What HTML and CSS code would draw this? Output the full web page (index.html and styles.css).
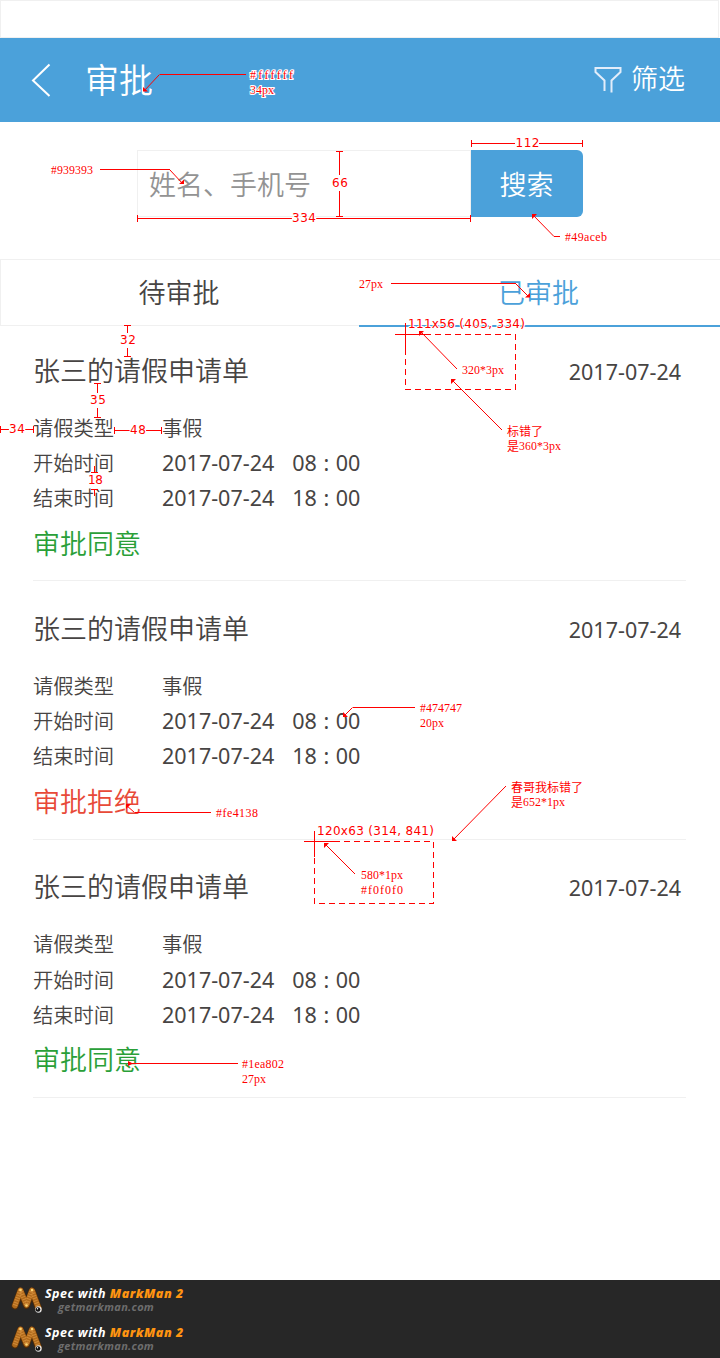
FILE: index.html
```html
<!DOCTYPE html>
<html lang="zh-CN">
<head>
<meta charset="utf-8">
<title>审批</title>
<link rel="stylesheet" href="styles.css">
</head>
<body>
<div class="page">
  <div class="statusbar"></div>
  <header class="header">
    <svg class="back" width="20" height="34" viewBox="0 0 20 34"><path d="M18.5 1.500 2 17.500 18.500 33" fill="none" stroke="#fff" stroke-width="2"/></svg>
    <h1 class="title">审批</h1>
    <svg class="funnel" width="28" height="28" viewBox="0 0 28 28"><path d="M10.500 25V14.500L1.500 6V2H26.500V6L17.500 14.500V26.500" fill="none" stroke="#e2edfa" stroke-width="2"/></svg>
    <span class="filter">筛选</span>
  </header>
  <div class="search">
    <div class="field">姓名、手机号</div>
    <div class="button">搜索</div>
  </div>
  <nav class="tabs">
    <div class="tab">待审批</div>
    <div class="tab active">已审批</div>
  </nav>
  <main class="list">
    <section class="card">
      <div class="head"><h2 class="name">张三的请假申请单</h2><span class="date">2017-07-24</span></div>
      <dl class="rows">
        <dt>请假类型</dt><dd>事假</dd>
        <dt>开始时间</dt><dd class="num"><span>2017-07-24</span><span class="clock">08 : 00</span></dd>
        <dt>结束时间</dt><dd class="num"><span>2017-07-24</span><span class="clock">18 : 00</span></dd>
      </dl>
      <p class="state ok">审批同意</p>
    </section>
    <section class="card">
      <div class="head"><h2 class="name">张三的请假申请单</h2><span class="date">2017-07-24</span></div>
      <dl class="rows">
        <dt>请假类型</dt><dd>事假</dd>
        <dt>开始时间</dt><dd class="num"><span>2017-07-24</span><span class="clock">08 : 00</span></dd>
        <dt>结束时间</dt><dd class="num"><span>2017-07-24</span><span class="clock">18 : 00</span></dd>
      </dl>
      <p class="state no">审批拒绝</p>
    </section>
    <section class="card">
      <div class="head"><h2 class="name">张三的请假申请单</h2><span class="date">2017-07-24</span></div>
      <dl class="rows">
        <dt>请假类型</dt><dd>事假</dd>
        <dt>开始时间</dt><dd class="num"><span>2017-07-24</span><span class="clock">08 : 00</span></dd>
        <dt>结束时间</dt><dd class="num"><span>2017-07-24</span><span class="clock">18 : 00</span></dd>
      </dl>
      <p class="state ok">审批同意</p>
    </section>
  </main>
  <footer class="footer">
    <div class="brand">
      <svg class="worm" width="34" height="30" viewBox="0 0 34 30"><use href="#worm"/></svg>
      <div class="credit"><div class="spec">Spec with <b>MarkMan 2</b></div><div class="site">getmarkman.com</div></div>
    </div>
    <div class="brand">
      <svg class="worm" width="34" height="30" viewBox="0 0 34 30"><use href="#worm"/></svg>
      <div class="credit"><div class="spec">Spec with <b>MarkMan 2</b></div><div class="site">getmarkman.com</div></div>
    </div>
  </footer>

  <svg class="marks" width="720" height="1358" viewBox="0 0 720 1358">
    <defs>
      <g id="worm" fill="none" stroke-linecap="round" stroke-linejoin="round">
        <path d="M4 20 9.500 5 15.500 19.500 21 5 27.500 22.500" stroke="#4f2b08" stroke-width="7"/>
        <path d="M4 19.500 9.500 4.500 15.500 19 21 4.500 27.500 22" stroke="#b06a1c" stroke-width="5.600"/>
        <path d="M4 19.500 9.500 4.500 15.500 19 21 4.500 27.500 22" stroke="#d08a38" stroke-width="4.500" stroke-linecap="butt" stroke-dasharray="1 1.500"/>
        <g fill="#ffd773"><circle cx="9.500" cy="4" r="1.300"/><circle cx="21" cy="4" r="1.300"/><circle cx="15.500" cy="19.500" r="1.300"/></g>
        <circle cx="27.500" cy="23.500" r="3.200" fill="#e4e4e4"/><circle cx="27" cy="23.500" r="2.300" fill="#111"/><circle cx="26.500" cy="22.800" r=".7" fill="#fff"/>
      </g>
    </defs>
    <g class="lines">
      <path d="M246 74.500H159.500M100 169.500H169.500M391 283.500H515.500M415 707.500H352.500M211 812.500H134.500M238 1063.500H130M554 236.500H560"/>
      <path d="M137.500 215V222M470.500 215V222M137.500 218.500H292M316 218.500H470"/>
      <path d="M471.500 140V147M582.500 140V147M471.500 143.500H515M539 143.500H582"/>
      <path d="M336 151.500H343M336 216.500H343M339.500 151V175M339.500 191V216"/>
      <path d="M124 325.500H131M124 356.500H131M127.500 325V333M127.500 348V356"/>
      <path d="M94 383.500H101M94 417.500H101M97.500 383V393M97.500 408V417"/>
      <path d="M.5 426V433M33.500 426V433M0 429.500H9M25 429.500H33"/>
      <path d="M114.500 427V434M161.500 427V434M115 430.500H130M146 430.500H161"/>
      <path d="M91 472.500H98M91 489.500H98M94.500 466V472M94.500 490V496"/>
      <path d="M395 334.500H425M405.500 323V350M304 841.500H334M314.500 831V857"/>
      <path class="dash" d="M425 334.500H515.500V389.500H405.500V344M334 841.500H433.500V903.500H314.500V851"/>
    </g>
    <g class="leaders">
      <path d="M159.500 74.500 144 91M169.500 169.500 183 184M515.500 283.500 529 297M352.500 707.500 344 716M134.500 812.500 126 805M554 236.500 533 215M457 369 421 332M502 430 452 380M506 786 453 840M355 874 325 844"/>
    </g>
    <g class="heads">
      <path d="M143 87V91.500H148zM184 179.500V184H179zM530 293V297.500H525zM343 712V717H348zM126 804V809L131 804zM128 1061V1066L133 1063.500zM532 214V219L537 214zM419 331V336L424 331zM451 379V384L456 379zM452 836V841H457zM324 843V848L329 843z"/>
    </g>
    <g class="note">
      <text x="250" y="79" textLength="43">#ffffff</text><text x="250" y="94" textLength="24">34px</text>
      <text x="51" y="174" textLength="42">#939393</text>
      <text x="565" y="241" textLength="42">#49aceb</text>
      <text x="359" y="288" textLength="24">27px</text>
      <text x="462" y="374" textLength="42">320*3px</text>
      <text x="507" y="436">标错了</text><text x="507" y="451">是</text><text x="519" y="450" textLength="42">360*3px</text>
      <text x="420" y="712" textLength="42">#474747</text><text x="420" y="727" textLength="24">20px</text>
      <text x="216" y="817" textLength="42">#fe4138</text>
      <text x="511" y="792">春哥我标错了</text><text x="511" y="807">是</text><text x="523" y="806" textLength="42">652*1px</text>
      <text x="361" y="879" textLength="42">580*1px</text><text x="361" y="894" textLength="42">#f0f0f0</text>
      <text x="242" y="1068" textLength="42">#1ea802</text><text x="242" y="1083" textLength="24">27px</text>
    </g>
    <g class="size">
      <text x="292" y="222" textLength="24">334</text>
      <text x="515.500" y="147" textLength="24">112</text>
      <text x="332" y="187" textLength="16">66</text>
      <text x="120" y="344" textLength="16">32</text>
      <text x="90" y="404" textLength="16">35</text>
      <text x="9" y="433" textLength="16">34</text>
      <text x="130" y="434" textLength="16">48</text>
      <text x="88" y="484" textLength="15">18</text>
      <text x="408" y="328" textLength="117">111x56 (405, 334)</text>
      <text x="317" y="835" textLength="117">120x63 (314, 841)</text>
    </g>
  </svg>
</div>
</body>
</html>
```
FILE: styles.css
```css
* { box-sizing: border-box; margin: 0; padding: 0; }
body {
  width: 720px;
  background: #fff;
  color: #474443;
  font-family: "Noto Sans CJK SC", sans-serif;
  font-weight: 350;
}
.page { position: relative; width: 720px; height: 1358px; display: flex; flex-direction: column; overflow: hidden; }
.statusbar { width: 719px; height: 38px; border: 1px solid #f0f0f0; }
.header { height: 84px; background: #4ba1da; color: #fff; display: flex; align-items: center; padding: 0 35px 0 31px; }
.title { font-size: 34px; font-weight: 350; line-height: 84px; margin-left: 34px; margin-top: -2px; }
.funnel { margin-left: auto; margin-top: -1px; }
.filter { font-size: 27px; line-height: 84px; margin-left: 9px; margin-top: -4px; }
.search { height: 137px; padding: 28px 0 0 137px; display: flex; }
.field { width: 334px; height: 67px; border: 1px solid #f0f0f0; color: #939393; font-size: 27px; line-height: 66px; padding-left: 11px; }
.button { width: 112px; height: 67px; background: #4ba1da; color: #fff; border-radius: 0 6px 6px 0; text-align: center; font-size: 27px; line-height: 68px; padding-right: 1px; }
.tabs { height: 68px; display: flex; }
.tab { width: 359px; height: 67px; border: 1px solid #f0f0f0; border-right: 0; font-size: 27px; line-height: 63px; text-align: center; padding-right: 2px; }
.tab.active { width: 361px; height: 68px; color: #4ba1da; border-left: 0; border-bottom: 2px solid #4ba1da; }
.list { padding: 0 34px 0 33px; }
.card { height: 258.600px; padding-top: 27.800px; border-bottom: 1px solid #f0f0f0; }
.card:first-child { height: 254px; padding-top: 23.900px; }
.head { display: flex; justify-content: space-between; align-items: center; height: 40px; }
.name { font-size: 27px; font-weight: 350; line-height: 37px; margin-top: -3px; }
.date, .num { font-family: "Noto Sans", sans-serif; font-size: 21.500px; font-weight: 400; }
.date { margin-right: 5px; line-height: 40px; margin-top: 2px; }
.rows { display: grid; grid-template-columns: 129px 1fr; grid-auto-rows: 35.300px; font-size: 20.300px; line-height: 35px; margin-top: 19px; }
.num { display: flex; gap: 18px; font-size: 21.500px; }
.clock { word-spacing: 1px; }
.state { font-size: 27px; line-height: 53px; }
.ok { color: #2a9f38; }
.no { color: #e84a38; }
.footer { margin-top: auto; height: 78px; background: #272727; }
.brand { height: 39px; display: flex; padding-left: 11px; }
.worm { margin-top: 6px; }
.credit { font-family: "Open Sans", sans-serif; font-style: italic; font-weight: 700; padding-top: 6px; }
.spec { color: #fff; font-size: 12.500px; line-height: 15px; letter-spacing: .5px; }
.spec b { color: #ff9411; }
.site { color: #6d6d6d; font-size: 11px; line-height: 11px; padding-left: 13px; letter-spacing: .3px; }
.marks { position: absolute; left: 0; top: 0; }
.lines, .leaders { fill: none; stroke: #f00; stroke-width: 1; }
.lines { shape-rendering: crispEdges; }
.dash { stroke-dasharray: 6 4; }
.heads { fill: #f00; }
.note, .size { fill: #f00; stroke: #fff; stroke-width: 2px; paint-order: stroke; font-weight: 400; }
.note { font: 12px "Liberation Serif", "Noto Sans CJK SC", sans-serif; }
.size { font: 12px "DejaVu Sans", sans-serif; }
```
